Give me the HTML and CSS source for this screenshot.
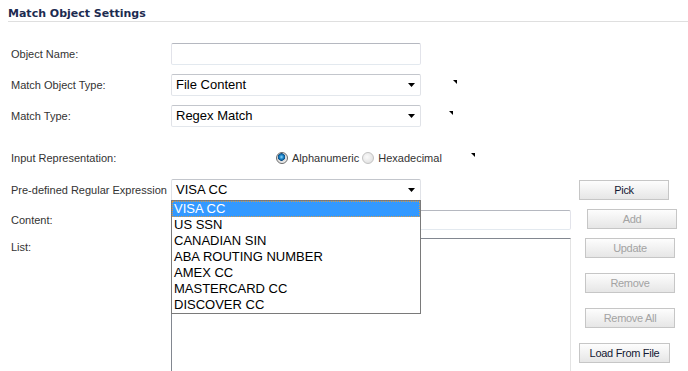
FILE: index.html
```html
<!DOCTYPE html>
<html lang="en">
  <head>
    <meta charset="UTF-8" />
    <meta name="viewport" content="width=device-width, initial-scale=1" />
    <title>Match Object Settings</title>
    <link rel="stylesheet" href="styles.css">
  </head>
  <body>
    <div class="panel">
      <h2 class="section-title">Match Object Settings</h2>

      <div class="form-row first">
        <label class="field-label" for="objectName">Object Name:</label>
        <input type="text" id="objectName" class="text-input name-input" />
      </div>

      <div class="form-row">
        <span class="field-label">Match Object Type:</span>
        <div class="select-box">
          <span class="select-value">File Content</span>
          <svg class="select-arrow" width="7" height="4" viewBox="0 0 7 4"><polygon points="0,0 7,0 3.5,4" /></svg>
        </div>
        <span class="help-mark mark-type"></span>
      </div>

      <div class="form-row">
        <span class="field-label">Match Type:</span>
        <div class="select-box">
          <span class="select-value">Regex Match</span>
          <svg class="select-arrow" width="7" height="4" viewBox="0 0 7 4"><polygon points="0,0 7,0 3.5,4" /></svg>
        </div>
        <span class="help-mark mark-match"></span>
      </div>

      <div class="form-row radio-row">
        <span class="field-label">Input Representation:</span>
        <div class="radio-group">
          <span class="radio checked"></span>
          <span class="radio-text">Alphanumeric</span>
          <span class="radio"></span>
          <span class="radio-text">Hexadecimal</span>
        </div>
        <span class="help-mark mark-input"></span>
      </div>

      <div class="regex-section">
        <div class="regex-fields">
          <span class="field-label">Pre-defined Regular Expression</span>
          <div class="select-box regex-select">
            <span class="select-value">VISA CC</span>
            <svg class="select-arrow" width="7" height="4" viewBox="0 0 7 4"><polygon points="0,0 7,0 3.5,4" /></svg>
            <ul class="dropdown-list">
              <li class="selected">VISA CC</li>
              <li>US SSN</li>
              <li>CANADIAN SIN</li>
              <li>ABA ROUTING NUMBER</li>
              <li>AMEX CC</li>
              <li>MASTERCARD CC</li>
              <li>DISCOVER CC</li>
            </ul>
          </div>

          <label class="field-label" for="content">Content:</label>
          <input type="text" id="content" class="text-input content-input" />

          <label class="field-label list-label" for="list">List:</label>
          <textarea id="list" class="list-box"></textarea>
        </div>

        <div class="actions">
          <button type="button" class="btn btn-pick">Pick</button>
          <button type="button" class="btn btn-add" disabled>Add</button>
          <button type="button" class="btn btn-mid" disabled>Update</button>
          <button type="button" class="btn btn-mid spaced" disabled>Remove</button>
          <button type="button" class="btn btn-mid spaced" disabled>Remove All</button>
          <button type="button" class="btn btn-load spaced">Load From File</button>
        </div>
      </div>
    </div>
  </body>
</html>
```

FILE: styles.css
```css
/* Reset and base */
* {
  margin: 0;
  padding: 0;
  box-sizing: border-box;
}

body {
  font-family: "Liberation Sans", Arial, sans-serif;
  font-size: 11px;
  color: #333333;
  background: #ffffff;
  overflow: hidden;
}

.panel {
  width: 688px;
  height: 371px;
  overflow: hidden;
}

.section-title {
  margin-left: 8px;
  padding-top: 7px;
  font-family: "DejaVu Sans", Verdana, sans-serif;
  font-size: 11px;
  font-weight: 700;
  line-height: 14px;
  color: #1d2b50;
  border-bottom: 1px solid #dfdfdf;
}

/* Form rows */
.form-row {
  display: flex;
  align-items: center;
  height: 22px;
  margin-top: 9px;
  padding-left: 11px;
}

.form-row.first {
  margin-top: 21px;
}

.form-row.radio-row {
  margin-top: 20px;
}

.field-label {
  flex: 0 0 160px;
  width: 160px;
  line-height: 13px;
  color: #333333;
}

.text-input {
  height: 22px;
  border: 1px solid;
  border-color: #b5b8c0 #e2e3ea #e3e9ef #e2e3ea;
  border-radius: 2px;
  background: #ffffff;
  outline: none;
  font-family: "Liberation Sans", Arial, sans-serif;
  font-size: 13px;
}

.name-input {
  width: 250px;
}

.select-box {
  position: relative;
  display: flex;
  align-items: center;
  justify-content: space-between;
  width: 250px;
  height: 22px;
  padding: 0 5px 0 4px;
  border: 1px solid;
  border-color: #c3c6cc #e0e2e7 #e3e7ec #e0e2e7;
  border-radius: 2px;
  background: #ffffff;
  font-size: 13px;
  color: #000000;
}

.select-value {
  line-height: 16px;
}

.select-arrow {
  display: block;
  fill: #000000;
}

.help-mark {
  align-self: flex-start;
  width: 0;
  height: 0;
  border-top: 4px solid #000000;
  border-left: 4px solid transparent;
  margin-top: 6px;
}

.mark-type {
  margin-left: 32px;
}

.mark-match {
  margin-left: 28px;
}

.mark-input {
  margin-left: 26px;
}

/* Radios */
.radio-group {
  display: flex;
  align-items: center;
  padding-left: 105px;
}

.radio {
  width: 12px;
  height: 12px;
  border-radius: 50%;
  border: 1px solid #c2c2c2;
  background: radial-gradient(circle at 40% 40%, #fafafa 0, #e4e4e4 70%);
}

.radio.checked {
  border-color: #6a6a6a;
  background: radial-gradient(circle at 45% 40%, #8fd6ff 0, #1c86c8 2px, #0b4d86 3.5px, #d9d9d9 4px, #f2f2f2 6px);
}

.radio-text {
  margin: 0 3px 0 4px;
  color: #333333;
}

/* Regular expression section */
.regex-section {
  display: flex;
  margin-top: 10px;
  padding-left: 11px;
}

.regex-fields {
  display: grid;
  grid-template-columns: 160px 400px;
  grid-template-rows: 23px 20px auto;
  row-gap: 8px;
  align-items: center;
}

.regex-select {
  align-self: start;
  z-index: 2;
}

.content-input {
  width: 400px;
  height: 20px;
}

.list-label {
  align-self: start;
  margin-top: 3px;
}

.list-box {
  display: block;
  width: 400px;
  height: 160px;
  border: 1px solid;
  border-color: #828790 #e3e3e3 #e3e3e3 #828790;
  resize: none;
  outline: none;
}

.dropdown-list {
  position: absolute;
  top: 20px;
  left: -1px;
  width: 250px;
  list-style: none;
  background: #ffffff;
  border: 1px solid #7a7a7a;
  font-size: 13px;
  color: #000000;
}

.dropdown-list li {
  height: 16px;
  line-height: 16px;
  padding-left: 2px;
}

.dropdown-list li.selected {
  background: #3399ff;
  color: #ffffff;
  outline: 1px dotted #d49a4a;
  outline-offset: -1px;
}

/* Buttons */
.actions {
  display: flex;
  flex-direction: column;
  align-items: flex-start;
}

.btn {
  width: 90px;
  height: 20px;
  margin-top: 9px;
  border: 1px solid #c6c6c6;
  background: linear-gradient(#fdfdfd, #e6e6e6);
  font-family: "Liberation Sans", Arial, sans-serif;
  font-size: 11px;
  letter-spacing: -0.3px;
  color: #141833;
  cursor: pointer;
}

.btn:disabled {
  color: #a3a3a3;
  cursor: default;
}

.btn.spaced {
  margin-top: 15px;
}

.btn-pick {
  margin-top: 1px;
  margin-left: 8px;
}

.btn-add {
  margin-left: 16px;
}

.btn-mid {
  margin-left: 14px;
}

.btn-load {
  width: 91px;
  margin-left: 8px;
}
```
